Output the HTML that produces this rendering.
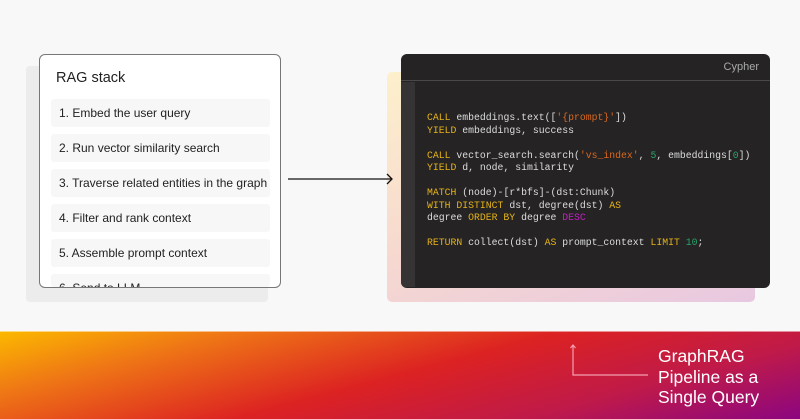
<!DOCTYPE html>
<html><head><style>
*{margin:0;padding:0;box-sizing:border-box}
body{width:800px;height:419px;background:#f8f8f8;position:relative;overflow:hidden;font-family:"Liberation Sans",sans-serif}
.abs{position:absolute}
.item{position:absolute;left:11px;width:219px;height:28px;background:#f7f7f7;border-radius:3px;font-size:12px;color:#222;line-height:28px;padding-left:8px;white-space:nowrap;overflow:hidden}
pre{font-family:"Liberation Mono",monospace;font-size:9.8px;line-height:12.5px;color:#ddd}
.k{color:#e5b319}.s{color:#d9691e}.n{color:#2aa36b}.m{color:#c81ec8}
</style></head><body>
<div class="abs" style="left:26px;top:66px;width:242px;height:236px;background:#ececec;border-radius:4px"></div>
<div class="abs" style="left:39px;top:54px;width:242px;height:234px;background:#fff;border:1px solid #777;border-radius:6px;overflow:hidden">
 <div class="abs" style="left:16px;top:15px;font-size:14.5px;color:#222">RAG stack</div>
 <div class="item" style="top:44px">1. Embed the user query</div>
 <div class="item" style="top:79px">2. Run vector similarity search</div>
 <div class="item" style="top:114px">3. Traverse related entities in the graph</div>
 <div class="item" style="top:149px">4. Filter and rank context</div>
 <div class="item" style="top:184px">5. Assemble prompt context</div>
 <div class="item" style="top:219px;height:13px;overflow:hidden">6. Send to LLM</div>
</div>
<div class="abs" style="left:387px;top:72px;width:368px;height:230px;border-radius:5px;background:linear-gradient(160deg,#fdf0cc 0%,#f7d9cf 50%,#e8c8e0 100%)"></div>
<svg class="abs" style="left:286px;top:172px;z-index:5" width="110" height="14"><line x1="2" y1="7" x2="106" y2="7" stroke="#111" stroke-width="1.3"/><path d="M101 2 L106 7 L101 12" fill="none" stroke="#111" stroke-width="1.3"/></svg>
<div class="abs" style="left:401px;top:54px;width:369px;height:234px;background:#252324;border-radius:6px;overflow:hidden">
 <div class="abs" style="left:0;top:0;width:100%;height:27px;border-bottom:1px solid #4a4849"></div>
 <div class="abs" style="right:11px;top:7px;font-size:11px;color:#aaa">Cypher</div>
 <div class="abs" style="left:0;top:28px;width:14px;height:205px;background:#353334"></div>
 <pre class="abs" style="left:26px;top:58px"><span class="k">CALL</span> embeddings.text([<span class="s">'{prompt}'</span>])
<span class="k">YIELD</span> embeddings, success

<span class="k">CALL</span> vector_search.search(<span class="s">'vs_index'</span>, <span class="n">5</span>, embeddings[<span class="n">0</span>])
<span class="k">YIELD</span> d, node, similarity

<span class="k">MATCH</span> (node)-[r*bfs]-(dst:Chunk)
<span class="k">WITH DISTINCT</span> dst, degree(dst) <span class="k">AS</span>
degree <span class="k">ORDER BY</span> degree <span class="m">DESC</span>

<span class="k">RETURN</span> collect(dst) <span class="k">AS</span> prompt_context <span class="k">LIMIT</span> <span class="n">10</span>;</pre>
</div>
<div class="abs" style="left:0;top:331px;width:800px;height:88px;background:linear-gradient(165deg,#fcb900 0%,#ee7316 22%,#dc2222 50%,#c01a48 75%,#8c0680 100%)"></div>
<div class="abs" style="left:0;top:331px;width:800px;height:1px;background:rgba(255,255,255,0.5)"></div>
<svg class="abs" style="left:566px;top:340px" width="90" height="40"><path d="M7 5 V35 H82" fill="none" stroke="#f3a0b0" stroke-width="1.2"/><path d="M4.5 8 L7 5 L9.5 8" fill="none" stroke="#f3a0b0" stroke-width="1.2"/></svg>
<div class="abs" style="left:658px;top:346px;font-size:17.5px;line-height:20.5px;color:#fff;font-weight:500">GraphRAG<br>Pipeline as a<br>Single Query</div>
</body></html>
